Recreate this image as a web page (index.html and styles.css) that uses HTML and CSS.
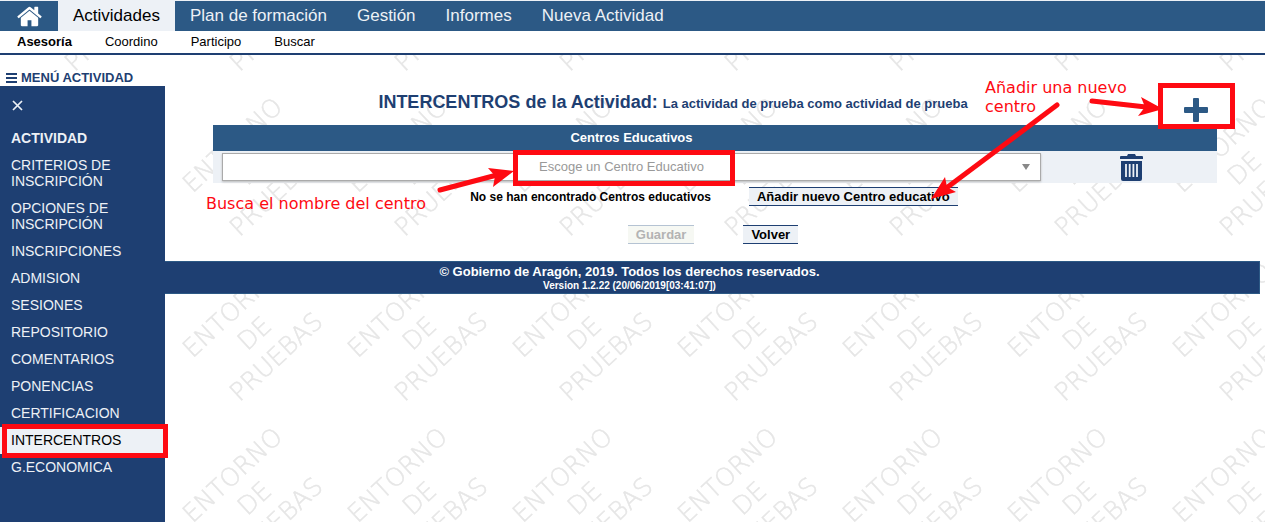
FILE: index.html
```html
<!DOCTYPE html>
<html lang="es">
<head>
<meta charset="utf-8">
<meta name="viewport" content="width=device-width, initial-scale=1">
<title>Intercentros de la Actividad</title>
<link rel="stylesheet" href="styles.css">
</head>
<body>
<svg class="watermark" aria-hidden="true">
  <defs>
    <pattern id="env" width="165" height="165" y="90" patternUnits="userSpaceOnUse">
      <g class="watermark-text" transform="translate(89 78) rotate(-43)">
        <text y="-23">ENTORNO</text>
        <text y="9">DE</text>
        <text y="41">PRUEBAS</text>
      </g>
    </pattern>
  </defs>
  <rect width="100%" height="100%" fill="url(#env)"/>
</svg>

<header class="header">
  <nav class="nav" aria-label="Principal">
    <a class="nav-home" href="#" aria-label="Inicio">
      <svg width="27" height="27" viewBox="0 0 1792 1792" fill="currentColor"><path d="M1472 992v480q0 26-19 45t-45 19h-384v-384h-256v384h-384q-26 0-45-19t-19-45v-480q0-1 .5-3t.5-3l575-474 575 474q1 2 1 6zm223-69l-62 74q-8 9-21 11h-3q-13 0-21-7l-692-577-692 577q-12 8-24 7-13-2-21-11l-62-74q-8-10-7-23.500t11-21.500l719-599q32-26 76-26t76 26l244 204v-195q0-14 9-23t23-9h192q14 0 23 9t9 23v408l219 182q10 8 11 21.500t-7 23.500z"/></svg>
    </a>
    <a class="nav-link active" href="#">Actividades</a>
    <a class="nav-link" href="#">Plan de formación</a>
    <a class="nav-link" href="#">Gestión</a>
    <a class="nav-link" href="#">Informes</a>
    <a class="nav-link" href="#">Nueva Actividad</a>
  </nav>
  <nav class="subnav" aria-label="Actividades">
    <a class="current" href="#">Asesoría</a>
    <a href="#">Coordino</a>
    <a href="#">Participo</a>
    <a href="#">Buscar</a>
  </nav>
</header>

<div class="layout">
  <aside class="side">
    <button class="menu-toggle" type="button">
      <svg width="11" height="11" viewBox="0 0 11 11" fill="currentColor"><path d="M0 0h11v2H0zM0 4h11v2H0zM0 8h11v2H0z"/></svg>
      MENÚ ACTIVIDAD
    </button>
    <nav class="menu" aria-label="Menú actividad">
      <button class="menu-close" type="button" aria-label="Cerrar menú">
        <svg width="11" height="11" viewBox="0 0 11 11" fill="none" stroke="currentColor" stroke-width="1.700"><path d="M1 1l9 9M10 1l-9 9"/></svg>
      </button>
      <a class="menu-item strong" href="#">ACTIVIDAD</a>
      <a class="menu-item" href="#">CRITERIOS DE INSCRIPCIÓN</a>
      <a class="menu-item" href="#">OPCIONES DE INSCRIPCIÓN</a>
      <a class="menu-item" href="#">INSCRIPCIONES</a>
      <a class="menu-item" href="#">ADMISION</a>
      <a class="menu-item" href="#">SESIONES</a>
      <a class="menu-item" href="#">REPOSITORIO</a>
      <a class="menu-item" href="#">COMENTARIOS</a>
      <a class="menu-item" href="#">PONENCIAS</a>
      <a class="menu-item" href="#">CERTIFICACION</a>
      <a class="menu-item selected" href="#">INTERCENTROS</a>
      <a class="menu-item" href="#">G.ECONOMICA</a>
    </nav>
  </aside>

  <div class="page">
    <main class="content">
      <div class="title-row">
        <h1 class="title">INTERCENTROS de la Actividad: <small>La actividad de prueba como actividad de prueba</small></h1>
        <button class="add" type="button" aria-label="Añadir centro">
          <svg width="24" height="24" viewBox="0 0 24 24" fill="currentColor"><path d="M10 0h4q1 0 1 1v8h8q1 0 1 1v4q0 1-1 1h-8v8q0 1-1 1h-4q-1 0-1-1v-8H1q-1 0-1-1v-4q0-1 1-1h8V1q0-1 1-1z"/></svg>
        </button>
      </div>
      <table class="centers">
        <thead>
          <tr><th class="col-center" id="centros">Centros Educativos</th><th class="col-action"></th></tr>
        </thead>
        <tbody>
          <tr>
            <td>
              <div class="picker">
                <select class="picker-select" aria-labelledby="centros"><option>Escoge un Centro Educativo</option></select>
                <svg class="picker-arrow" width="8" height="6" viewBox="0 0 8 6" fill="currentColor"><path d="M0 0h8L4 6z"/></svg>
              </div>
            </td>
            <td class="action">
              <button class="trash" type="button" aria-label="Eliminar">
                <svg width="24" height="27" viewBox="0 0 24 27"><path fill="currentColor" d="M1 2h6l1-2h7l1 2h6q1 0 1 1v2H0V3q0-1 1-1zM1 7h21v18q0 2-2 2H3q-2 0-2-2z"/><path fill="none" stroke="#edf1f6" stroke-width="1.800" d="M6 10v13M9.700 10v13M13.400 10v13M17 10v13"/></svg>
              </button>
            </td>
          </tr>
        </tbody>
      </table>
      <div class="notice">
        <p>No se han encontrado Centros educativos</p>
        <button class="btn" type="button">Añadir nuevo Centro educativo</button>
      </div>
      <div class="actions">
        <button class="btn" type="button" disabled>Guardar</button>
        <button class="btn" type="button">Volver</button>
      </div>
    </main>
    <footer class="footer">
      <p>© Gobierno de Aragón, 2019. Todos los derechos reservados.</p>
      <p class="version">Version 1.2.22 (20/06/2019[03:41:07])</p>
    </footer>
  </div>
</div>

<svg class="notes" width="1265" height="522" viewBox="0 0 1265 522">
  <g class="note-box">
    <rect x="515.500" y="152.500" width="217" height="31"/>
    <rect x="1160.500" y="85.500" width="72" height="41"/>
    <rect x="4.500" y="426.500" width="161" height="29"/>
  </g>
  <g class="note-line">
    <path d="M440 190L497 175"/>
    <path d="M1092 101L1146 107"/>
    <path d="M1057 105L945 189"/>
  </g>
  <g class="note-fill">
    <path d="M514 171L488 168L495 176L493 187z"/>
    <path d="M1163 109L1141 97L1145 107L1138 116z"/>
    <path d="M931 199L945 177L947 187L956 192z"/>
    <text x="206" y="209">Busca el nombre del centro</text>
    <text x="985" y="93">Añadir una nuevo</text>
    <text x="985" y="112">centro</text>
  </g>
</svg>
</body>
</html>
```
FILE: styles.css
```css
:root {
  --navy: #1e3f72;
  --blue: #2c5985;
  --pale: #edf1f6;
  --red: #fe0a12;
}

* {
  box-sizing: border-box;
}

body {
  margin: 0;
  min-height: 100vh;
  position: relative;
  display: flex;
  flex-direction: column;
  background: #fff;
  color: #000;
  font: 13px/16px "Liberation Sans", Arial, sans-serif;
}

p,
h1 {
  margin: 0;
}

a {
  color: inherit;
  text-decoration: none;
}

button {
  border: 0;
  padding: 0;
  background: none;
  color: inherit;
  font: inherit;
}

svg {
  display: block;
}

.watermark {
  position: absolute;
  inset: 0;
  width: 100%;
  height: 100%;
}

.watermark-text {
  fill: #e6e6e6;
  stroke: #e6e6e6;
  stroke-width: 0.5;
  font-family: "DejaVu Sans", sans-serif;
  font-size: 25px;
  font-weight: 200;
  text-anchor: middle;
}

.header {
  position: relative;
  background: #fff;
  border-top: 1px solid var(--pale);
  border-bottom: 2px solid var(--navy);
}

.nav {
  display: flex;
  height: 30px;
  background: var(--blue);
  color: var(--pale);
  font-size: 17px;
}

.nav-home {
  display: flex;
  align-items: center;
  justify-content: center;
  width: 58px;
  color: #fff;
}

.nav-link {
  padding: 0 15px;
  line-height: 29px;
}

.nav-link.active {
  background: var(--pale);
  color: #000;
}

.subnav {
  display: flex;
  gap: 33px;
  padding: 0 17px;
  line-height: 22px;
}

.current {
  font-weight: bold;
}

.layout {
  position: relative;
  flex: 1;
  display: flex;
}

.side {
  flex: none;
  width: 165px;
  display: flex;
  flex-direction: column;
}

.menu-toggle {
  display: flex;
  align-items: center;
  gap: 4px;
  padding: 15px 6px 0;
  color: var(--navy);
  font-weight: bold;
}

.menu {
  flex: 1;
  display: flex;
  flex-direction: column;
  background: var(--navy);
  color: var(--pale);
  font-size: 14px;
}

.menu-close {
  align-self: flex-start;
  padding: 14px 12px;
}

.menu-item {
  padding: 5px 32px 6px 11px;
}

.strong {
  font-weight: bold;
}

.selected {
  background: var(--pale);
  color: #000;
}

.page {
  flex: 1;
}

.content {
  padding: 28px 48px 17px;
}

.title-row {
  display: flex;
  align-items: center;
  height: 42px;
}

.title {
  flex: 1;
  padding-bottom: 3px;
  color: var(--navy);
  font-size: 18px;
  line-height: 20px;
  text-align: center;
}

.title small {
  font-size: 13px;
}

.add {
  display: flex;
  justify-content: flex-end;
  width: 84px;
  padding: 11px 9px 0 0;
  color: var(--blue);
}

.centers {
  width: 100%;
  border-collapse: collapse;
  table-layout: fixed;
}

.centers th {
  height: 26px;
  padding: 0;
  background: var(--blue);
  color: #fff;
}

.centers td {
  height: 32px;
  padding: 0 9px;
  background: var(--pale);
}

.centers .action {
  padding: 0 12px 0 9px;
}

.col-action {
  width: 167px;
}

.picker {
  position: relative;
}

.picker-select {
  display: block;
  width: 100%;
  height: 28px;
  padding: 0 20px 0 0;
  appearance: none;
  border: 1px solid #aaa;
  border-radius: 0;
  background: #fff;
  box-shadow: 0 1px 2px #bbb;
  color: #999;
  font: inherit;
  text-align: center;
  text-align-last: center;
}

.picker-arrow {
  position: absolute;
  top: 11px;
  right: 11px;
  color: #888;
}

.trash {
  display: block;
  margin: 0 auto;
  color: var(--navy);
}

.notice,
.actions {
  display: flex;
  align-items: center;
  justify-content: center;
}

.notice {
  gap: 38px;
  padding: 4px 2px 19px 0;
  font-size: 12px;
  font-weight: bold;
}

.actions {
  gap: 49px;
  padding-right: 4px;
}

.btn {
  height: 19px;
  padding: 0 8px;
  border: solid var(--navy);
  border-width: 1px 0;
  background: var(--pale);
  color: #000;
  font-size: 13px;
  font-weight: bold;
}

.btn:disabled {
  border-color: #b5c3d3;
  background: #f6f8f3;
  color: #b3b3b3;
}

.footer {
  margin-right: 5px;
  padding: 2px 165px 1px 0;
  border: 1px solid var(--blue);
  border-left: 0;
  background: var(--navy);
  color: #fff;
  font-weight: bold;
  text-align: center;
}

.version {
  font-size: 10px;
  line-height: 12px;
}

/* Help annotations drawn over the page */
.notes {
  position: absolute;
  top: 0;
  left: 0;
  pointer-events: none;
}

.note-box {
  fill: none;
  stroke: var(--red);
  stroke-width: 5px;
}

.note-line {
  fill: none;
  stroke: var(--red);
  stroke-width: 5px;
  stroke-linecap: round;
}

.note-fill {
  fill: var(--red);
  font-family: "DejaVu Sans", sans-serif;
  font-size: 16px;
}
```
